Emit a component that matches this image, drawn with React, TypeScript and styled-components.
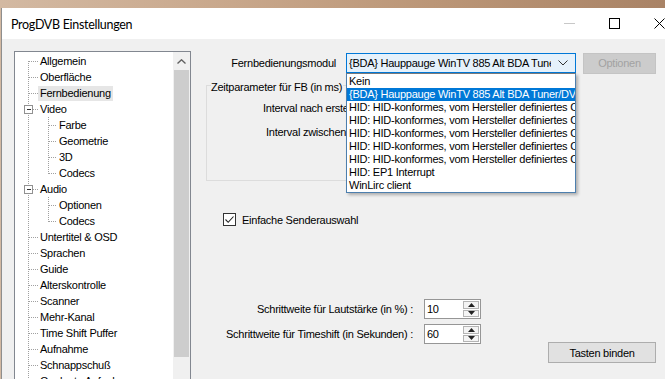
import React from "react";
import styled, { createGlobalStyle } from "styled-components";

const Global = createGlobalStyle`
  html, body { margin: 0; padding: 0; overflow: hidden; }
  body {
    width: 665px; height: 379px;
    background: linear-gradient(90deg, #d3b9a2 0%, #c8a78b 35%, #bb9677 65%, #a98366 100%);
    font-family: "Liberation Sans", Arial, sans-serif;
  }
`;

const TopStrip = styled.div`
  height: 8px;
`;

const Window = styled.div`
  margin-left: 1px;
  width: 680px;
  height: 371px;
  border-left: 1px solid #8e8e8e;
  background: #f0f0f0;
  display: flex;
  flex-direction: column;
  overflow: hidden;
`;

const TitleBar = styled.div`
  height: 31px;
  flex: none;
  background: #ffffff;
  display: flex;
  align-items: center;
`;

const Title = styled.div`
  flex: 1;
  padding: 1px 0 0 9px;
  font-family: "Lato", "Noto Sans", sans-serif;
  font-size: 12.5px;
  color: #000;
  letter-spacing: -0.3px;
`;

const CaptionButton = styled.div`
  width: 45px;
  height: 31px;
  display: flex;
  align-items: center;
  justify-content: center;
`;

const Body = styled.div`
  flex: 1;
  display: flex;
  padding: 12px 0 0 12px;
  font-size: 11px;
  letter-spacing: -0.25px;
  color: #000;
`;

const Tree = styled.div`
  width: 177px;
  height: 340px;
  flex: none;
  box-sizing: border-box;
  border: 1px solid #828790;
  background: #fff;
  display: flex;
`;

const TreeRows = styled.div`
  flex: 1;
  padding-top: 1px;
  overflow: hidden;
`;

const TreeRow = styled.div`
  height: 16px;
  display: flex;
  align-items: center;
  white-space: nowrap;
`;

const TreeLabel = styled.span<{ $selected?: boolean }>`
  height: 15px;
  line-height: 15px;
  padding: 0 2px;
  background: ${(p) => (p.$selected ? "#e6e6e6" : "transparent")};
`;

const ScrollBar = styled.div`
  width: 17px;
  flex: none;
  background: #f0f0f0;
  display: flex;
  flex-direction: column;
`;

const ScrollArrow = styled.div`
  height: 18px;
  display: flex;
  align-items: center;
  justify-content: center;
`;

const ScrollThumb = styled.div`
  height: 287px;
  margin: 0 1px;
  background: #cdcdcd;
`;

const Panel = styled.div`
  width: 451px;
  margin-left: 14px;
  padding-top: 2px;
  display: flex;
  flex-direction: column;
`;

const ModuleRow = styled.div`
  height: 20px;
  display: flex;
  align-items: center;
  gap: 0;
`;

const RightLabel = styled.div<{ $width?: number; $gap: number }>`
  ${(p) => (p.$width ? `width: ${p.$width}px; flex: none;` : "flex: 1;")}
  margin-right: ${(p) => p.$gap}px;
  text-align: right;
  white-space: nowrap;
`;

const ComboWrap = styled.div`
  position: relative;
  width: 230px;
  height: 20px;
  flex: none;
  margin-right: 7px;
`;

const Combo = styled.div`
  box-sizing: border-box;
  height: 20px;
  border: 1px solid #0078d7;
  background: #e5f1fb;
  display: flex;
  align-items: center;
  padding-left: 2px;
`;

const ComboText = styled.span`
  flex: 1;
  overflow: hidden;
  white-space: nowrap;
`;

const ComboArrow = styled.span`
  width: 24px;
  flex: none;
  display: flex;
  justify-content: center;
`;

const DropList = styled.div`
  position: absolute;
  top: 20px;
  left: 0;
  width: 230px;
  box-sizing: border-box;
  border: 1px solid #4d7fae;
  border-top-color: #7a7a7a;
  background: #fff;
  padding-top: 1px;
  box-shadow: 2px 2px 3px rgba(0, 0, 0, 0.28);
  z-index: 5;
`;

const DropItem = styled.div<{ $selected?: boolean }>`
  height: 13px;
  line-height: 13px;
  padding-left: 2px;
  white-space: nowrap;
  overflow: hidden;
  color: ${(p) => (p.$selected ? "#fff" : "#000")};
  background: ${(p) => (p.$selected ? "#0078d7" : "transparent")};
`;

const Button = styled.div<{ $disabled?: boolean; $width: number }>`
  width: ${(p) => p.$width}px;
  height: 21px;
  flex: none;
  box-sizing: border-box;
  display: flex;
  align-items: center;
  justify-content: center;
  border: 1px solid ${(p) => (p.$disabled ? "#c4c4c4" : "#adadad")};
  background: ${(p) => (p.$disabled ? "#cccccc" : "#e1e1e1")};
  color: ${(p) => (p.$disabled ? "#a2a2a2" : "#000")};
`;

const Group = styled.fieldset`
  margin: 5px 0 0 1px;
  width: 370px;
  box-sizing: border-box;
  border: 1px solid #dcdcdc;
  padding: 3px 0 36px 4px;
`;

const Legend = styled.legend`
  padding: 3px 1px 0 0;
  line-height: 12px;
`;

const GroupRow = styled.div<{ $indent: number }>`
  height: 24px;
  line-height: 24px;
  padding-left: ${(p) => p.$indent}px;
  white-space: nowrap;
`;

const CheckRow = styled.div`
  margin-top: 32px;
  padding-left: 18px;
  height: 13px;
  display: flex;
  align-items: center;
  gap: 6px;
`;

const CheckBox = styled.span`
  width: 13px;
  height: 13px;
  box-sizing: border-box;
  border: 1px solid #333;
  background: #fff;
  display: flex;
  align-items: center;
  justify-content: center;
`;

const Bottom = styled.div`
  margin-top: 73px;
  display: flex;
  align-items: flex-start;
`;

const SpinColumn = styled.div`
  display: flex;
  flex-direction: column;
  gap: 5px;
`;

const SpinRow = styled.div`
  height: 20px;
  display: flex;
  align-items: center;
`;

const Spin = styled.div`
  width: 57px;
  height: 20px;
  box-sizing: border-box;
  border: 1px solid #969696;
  background: #fff;
  display: flex;
`;

const SpinValue = styled.span`
  flex: 1;
  padding-left: 2px;
  line-height: 18px;
`;

const SpinButtons = styled.div`
  width: 16px;
  display: flex;
  flex-direction: column;
  padding: 1px 1px 1px 0;
  gap: 1px;
`;

const SpinButton = styled.div`
  flex: 1;
  border: 1px solid #b4b4b4;
  background: #f4f4f4;
  display: flex;
  align-items: center;
  justify-content: center;
`;

const BindColumn = styled.div`
  margin-left: auto;
  margin-top: 43px;
`;

type Node = { label: string; level: 0 | 1; expander?: boolean; last?: boolean; selected?: boolean };

const nodes: Node[] = [
  { label: "Allgemein", level: 0 },
  { label: "Oberfläche", level: 0 },
  { label: "Fernbedienung", level: 0, selected: true },
  { label: "Video", level: 0, expander: true },
  { label: "Farbe", level: 1 },
  { label: "Geometrie", level: 1 },
  { label: "3D", level: 1 },
  { label: "Codecs", level: 1, last: true },
  { label: "Audio", level: 0, expander: true },
  { label: "Optionen", level: 1 },
  { label: "Codecs", level: 1, last: true },
  { label: "Untertitel & OSD", level: 0 },
  { label: "Sprachen", level: 0 },
  { label: "Guide", level: 0 },
  { label: "Alterskontrolle", level: 0 },
  { label: "Scanner", level: 0 },
  { label: "Mehr-Kanal", level: 0 },
  { label: "Time Shift Puffer", level: 0 },
  { label: "Aufnahme", level: 0 },
  { label: "Schnappschuß", level: 0 },
  { label: "Geplante Aufnahme", level: 0 },
  { label: "Netzwerk", level: 0 },
];

const dot = { stroke: "#a0a0a0", strokeWidth: 1, strokeDasharray: "1 1", shapeRendering: "crispEdges" as const };

function Connector({ node, first }: { node: Node; first: boolean }) {
  const w = node.level === 0 ? 23 : 42;
  return (
    <svg width={w} height={16} style={{ flex: "none" }}>
      <line x1={13.5} y1={first ? 8 : 0} x2={13.5} y2={16} {...dot} />
      {node.level === 0 ? (
        <line x1={14} y1={8.5} x2={23} y2={8.5} {...dot} />
      ) : (
        <>
          <line x1={33.5} y1={0} x2={33.5} y2={node.last ? 9 : 16} {...dot} />
          <line x1={34} y1={8.5} x2={42} y2={8.5} {...dot} />
        </>
      )}
      {node.expander && (
        <g shapeRendering="crispEdges">
          <rect x={9.5} y={4.5} width={8} height={8} fill="#fff" stroke="#919191" />
          <line x1={11.5} y1={8.5} x2={16} y2={8.5} stroke="#333" />
        </g>
      )}
    </svg>
  );
}

const listItems = [
  "Kein",
  "{BDA} Hauppauge WinTV 885 Alt BDA Tuner/DVB-T",
  "HID: HID-konformes, vom Hersteller definiertes Consumer Control-Gerät",
  "HID: HID-konformes, vom Hersteller definiertes Consumer Control-Gerät",
  "HID: HID-konformes, vom Hersteller definiertes Consumer Control-Gerät",
  "HID: HID-konformes, vom Hersteller definiertes Consumer Control-Gerät",
  "HID: HID-konformes, vom Hersteller definiertes Consumer Control-Gerät",
  "HID: EP1 Interrupt",
  "WinLirc client",
];

function SpinBox({ value }: { value: string }) {
  return (
    <Spin>
      <SpinValue>{value}</SpinValue>
      <SpinButtons>
        <SpinButton>
          <svg width="7" height="4"><path d="M0 4 L3.5 0 L7 4 Z" fill="#222" /></svg>
        </SpinButton>
        <SpinButton>
          <svg width="7" height="4"><path d="M0 0 L3.5 4 L7 0 Z" fill="#222" /></svg>
        </SpinButton>
      </SpinButtons>
    </Spin>
  );
}

export default function App() {
  return (
    <>
      <Global />
      <TopStrip />
      <Window>
        <TitleBar>
          <Title>ProgDVB Einstellungen</Title>
          <CaptionButton>
            <svg width="11" height="1"><rect width="11" height="1" fill="#c8c8c8" /></svg>
          </CaptionButton>
          <CaptionButton>
            <svg width="11" height="11"><rect x="0.5" y="0.5" width="10" height="10" fill="none" stroke="#000" shapeRendering="crispEdges" /></svg>
          </CaptionButton>
          <CaptionButton>
            <svg width="11" height="11"><path d="M0.5 0.5 L10.5 10.5 M10.5 0.5 L0.5 10.5" stroke="#000" strokeWidth="1" /></svg>
          </CaptionButton>
        </TitleBar>
        <Body>
          <Tree>
            <TreeRows>
              {nodes.map((n, i) => (
                <TreeRow key={i}>
                  <Connector node={n} first={i === 0} />
                  <TreeLabel $selected={n.selected}>{n.label}</TreeLabel>
                </TreeRow>
              ))}
            </TreeRows>
            <ScrollBar>
              <ScrollArrow>
                <svg width="9" height="5"><path d="M0.5 4.5 L4.5 0.8 L8.5 4.5" fill="none" stroke="#606060" strokeWidth="1.4" /></svg>
              </ScrollArrow>
              <ScrollThumb />
            </ScrollBar>
          </Tree>
          <Panel>
            <ModuleRow>
              <RightLabel $gap={10}>Fernbedienungsmodul</RightLabel>
              <ComboWrap>
                <Combo>
                  <ComboText>{"{BDA} Hauppauge WinTV 885 Alt BDA Tuner/DVB-T"}</ComboText>
                  <ComboArrow>
                    <svg width="10" height="6"><path d="M0.5 0.5 L5 5 L9.5 0.5" fill="none" stroke="#333" strokeWidth="1" /></svg>
                  </ComboArrow>
                </Combo>
                <DropList>
                  {listItems.map((t, i) => (
                    <DropItem key={i} $selected={i === 1}>{t}</DropItem>
                  ))}
                </DropList>
              </ComboWrap>
              <Button $disabled $width={73}>Optionen</Button>
            </ModuleRow>
            <Group>
              <Legend>Zeitparameter für FB (in ms)</Legend>
              <GroupRow $indent={52}>Interval nach erstem Tastendruck :</GroupRow>
              <GroupRow $indent={55}>Interval zwischen Wiederholungen :</GroupRow>
            </Group>
            <CheckRow>
              <CheckBox>
                <svg width="11" height="11"><path d="M1.5 5.5 L4.2 8.3 L9.5 2.5" fill="none" stroke="#222" strokeWidth="1.1" /></svg>
              </CheckBox>
              <span>Einfache Senderauswahl</span>
            </CheckRow>
            <Bottom>
              <SpinColumn>
                <SpinRow>
                  <RightLabel $width={208} $gap={11}>Schrittweite für Lautstärke (in %) :</RightLabel>
                  <SpinBox value="10" />
                </SpinRow>
                <SpinRow>
                  <RightLabel $width={208} $gap={11}>Schrittweite für Timeshift (in Sekunden) :</RightLabel>
                  <SpinBox value="60" />
                </SpinRow>
              </SpinColumn>
              <BindColumn>
                <Button $width={108}>Tasten binden</Button>
              </BindColumn>
            </Bottom>
          </Panel>
        </Body>
      </Window>
    </>
  );
}
